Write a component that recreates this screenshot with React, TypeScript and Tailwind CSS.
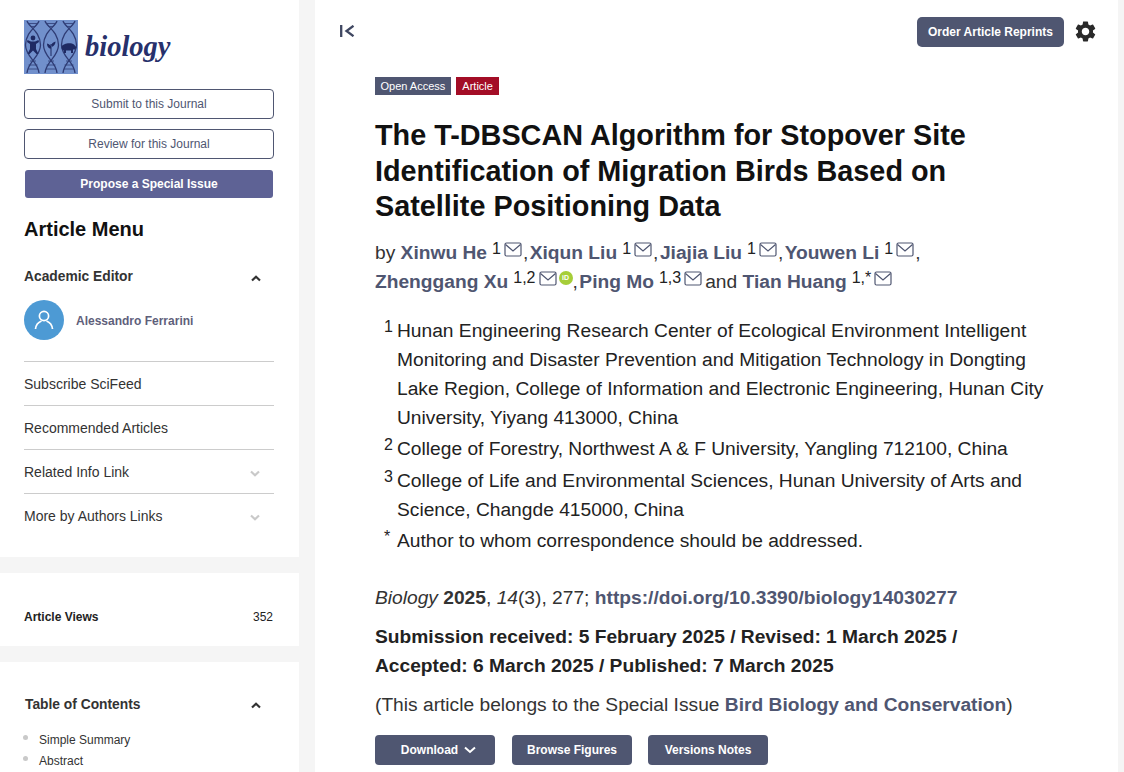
import React from "react";
import { MdSettings } from "react-icons/md";

const Mail = () => (
  <svg width="18" height="15" viewBox="0 0 18 15" fill="none" stroke="#4f5671" strokeWidth="1.2" className="inline-block align-baseline ml-[3px] mr-[1px] relative top-[-2px]">
    <rect x="1" y="1" width="16" height="13" rx="1.5" />
    <path d="M1.5 2.5 L9 9 L16.5 2.5" />
  </svg>
);

const Chevron = ({ up, light }: { up?: boolean; light?: boolean }) => (
  <svg width="10" height="7" viewBox="0 0 10 7" fill="none" stroke={light ? "#c9c9c9" : "#333333"} strokeWidth="2.2">
    {up ? <path d="M1 5.5 L5 1.8 L9 5.5" /> : <path d="M1 1.5 L5 5.2 L9 1.5" />}
  </svg>
);

const Logo = () => (
  <svg width="54" height="54" viewBox="0 0 54 54" className="shrink-0">
    <rect width="54" height="54" fill="#7190cc" />
    <g fill="none" stroke="#2f3c75" strokeWidth="1.3">
      {[0, 18, 36].map((x) => (
        <g key={x} transform={`translate(${x} 0)`}>
          <path d="M3 1 C 5 7, 16 11, 16.5 25 C 16.5 37, 4 41, 3 53" />
          <path d="M15 1 C 13 7, 2 11, 1.5 25 C 1.5 37, 14 41, 15 53" />
          <path d="M5 3.5 H13 M6.5 6.5 H11.5 M6 41 H12 M4.5 45 H13.5 M4 49 H14" strokeWidth="0.8" />
        </g>
      ))}
    </g>
    <g fill="#1f2a63">
      <circle cx="9" cy="18" r="2.4" />
      <path d="M3.5 20 L7 21.5 H11 L14.5 20 L15 22 L12 24 V29 L14.5 34 H12.5 L9 30.5 L5.5 34 H3.5 L6 29 V24 L3 22 Z" />
      <path d="M26.5 36 V24 H27.5 V36 Z M27 29 C 23.5 28 23 25 23 23.5 C 26 24 27 26 27 29 Z M27 27 C 30.5 26.5 31.5 23.5 31.5 21.5 C 29 22 27 24 27 27 Z" />
      <path d="M37.5 27 C 39 23 47 22.5 50 24.5 L52.5 27.5 L51 29.5 L49 29.5 V33 H47 V30.5 H42 V33 H40 V30.5 C 38.5 30.5 37.5 29 37.5 27 Z" />
    </g>
  </svg>
);

const Sup = ({ children }: { children: React.ReactNode }) => (
  <span className="text-[16px] leading-none font-normal text-[#222222] relative top-[-5px] ml-[5px]">{children}</span>
);

const Author = ({ name }: { name: string }) => <span className="font-bold text-[#4f5671]">{name}</span>;

const Comma = () => <span className="mr-[1.5px]">,</span>;

const MenuRow = ({ label, chevron }: { label: string; chevron?: boolean }) => (
  <div className="h-[44px] border-t border-[#cccccc] flex items-center justify-between pr-[14px] text-[14px] text-[#333333]">
    <span className="relative top-[1px]">{label}</span>
    {chevron && (
      <span className="relative top-[2px]">
        <Chevron light />
      </span>
    )}
  </div>
);

const Aff = ({ n, children }: { n: string; children: React.ReactNode }) => (
  <div className="flex">
    <span className="w-[22px] shrink-0 pl-[9px] text-[16px] leading-[22px] text-[#222222]">{n}</span>
    <span className="flex-1">{children}</span>
  </div>
);

const DarkBtn = ({ children, cls }: { children: React.ReactNode; cls?: string }) => (
  <div className={`w-[120px] h-[30px] rounded-[4px] bg-[#4f5671] text-white text-[12px] font-bold flex items-center justify-center ${cls ?? ""}`}>{children}</div>
);

export default function App() {
  return (
    <div className="w-[1124px] h-[772px] overflow-hidden bg-[#f5f5f5] flex font-['Liberation_Sans',Arial,sans-serif] text-[#222222]">
      <aside className="w-[299px] shrink-0 flex flex-col gap-[16px]">
        <section className="bg-white h-[557px] pl-[24px] pr-[25px] pt-[20px]">
          <div className="flex items-center gap-[7px] h-[54px]">
            <Logo />
            <span className="font-['Liberation_Serif',serif] italic font-bold text-[28.5px] text-[#27306b] leading-none">biology</span>
          </div>
          <div className="mt-[15px] h-[30px] rounded-[4px] border border-[#4f5671] flex items-center justify-center text-[12px] text-[#4f5671]">Submit to this Journal</div>
          <div className="mt-[10px] h-[30px] rounded-[4px] border border-[#4f5671] flex items-center justify-center text-[12px] text-[#4f5671]">Review for this Journal</div>
          <div className="mt-[11px] mx-[1px] h-[28px] rounded-[3px] bg-[#5e6295] flex items-center justify-center text-[12px] font-bold text-white">Propose a Special Issue</div>
          <h2 className="mt-[19px] text-[20px] leading-[24px] font-bold text-[#111111]">Article Menu</h2>
          <div className="mt-[28px] flex items-center justify-between pr-[13px] h-[16px]">
            <span className="text-[13.8px] font-bold text-[#333333]">Academic Editor</span>
            <span className="relative top-[1px]"><Chevron up /></span>
          </div>
          <div className="mt-[15px] flex items-center gap-[12px]">
            <div className="w-[40px] h-[40px] rounded-full bg-[#4d9ad4] flex items-center justify-center">
              <svg width="22" height="22" viewBox="0 0 22 22" fill="none" stroke="white" strokeWidth="1.7">
                <circle cx="11" cy="7" r="4.6" />
                <path d="M2.5 20 C 3 15 6 13 8.5 12 M19.5 20 C 19 15 16 13 13.5 12" />
              </svg>
            </div>
            <span className="text-[12px] font-bold text-[#5f5f7b] relative top-[1px]">Alessandro Ferrarini</span>
          </div>
          <div className="mt-[21px]">
            <MenuRow label="Subscribe SciFeed" />
            <MenuRow label="Recommended Articles" />
            <MenuRow label="Related Info Link" chevron />
            <MenuRow label="More by Authors Links" chevron />
          </div>
        </section>
        <section className="bg-white h-[73px] pl-[24px] pr-[26px] flex items-center justify-between pt-[15px] text-[12px]">
          <span className="font-bold text-[#222222]">Article Views</span>
          <span>352</span>
        </section>
        <section className="bg-white flex-1 pl-[25px] pr-[38px] pt-[34px]">
          <div className="flex items-center justify-between h-[16px]">
            <span className="text-[13.8px] font-bold text-[#333333] relative top-[1px]">Table of Contents</span>
            <span className="relative top-[1px]"><Chevron up /></span>
          </div>
          <ul className="mt-[17px] text-[12px] text-[#333333]">
            {["Simple Summary", "Abstract"].map((t) => (
              <li key={t} className="h-[21px] flex items-center relative pl-[14px]">
                <span className="absolute left-[-2px] top-[6px] w-[5px] h-[5px] rounded-full bg-[#c9c9c9]" />
                {t}
              </li>
            ))}
          </ul>
        </section>
      </aside>
      <main className="ml-[16px] w-[803px] bg-white">
        <div className="h-[63px] pl-[25px] pr-[22px] flex items-center justify-between">
          <svg width="15" height="12" viewBox="0 0 15 12" fill="none" stroke="#3f4761" strokeWidth="2.3" className="relative top-[-1px]">
            <path d="M1.2 0 V12 M13.5 0.8 L6.5 6 L13.5 11.2" />
          </svg>
          <div className="flex items-center gap-[9px]">
            <div className="w-[147px] h-[30px] rounded-[5px] bg-[#4f5671] text-white text-[12px] font-bold flex items-center justify-center">Order Article Reprints</div>
            <MdSettings size={25} color="#2a2a2a" className="mr-[-2px]" />
          </div>
        </div>
        <div className="pl-[60px] pr-[72px]">
          <div className="flex gap-[5px] mt-[14px] text-[11px] text-white h-[18px]">
            <span className="bg-[#4f5671] px-[5.5px] flex items-center">Open Access</span>
            <span className="bg-[#a30d26] px-[6.5px] flex items-center">Article</span>
          </div>
          <h1 className="mt-[23px] text-[28.8px] leading-[35.5px] font-bold text-[#111111]">
            The T-DBSCAN Algorithm for Stopover Site Identification of Migration Birds Based on Satellite Positioning Data
          </h1>
          <div className="mt-[13px] text-[19.2px] leading-[29px] text-[#333333]">
            by <Author name="Xinwu He" /><Sup>1</Sup><Mail /><Comma /><Author name="Xiqun Liu" /><Sup>1</Sup><Mail /><Comma /><Author name="Jiajia Liu" /><Sup>1</Sup><Mail /><Comma /><Author name="Youwen Li" /><Sup>1</Sup><Mail />,
            <br />
            <Author name="Zhenggang Xu" /><Sup>1,2</Sup><Mail />
            <span className="inline-block w-[14px] h-[14px] rounded-full bg-[#a6ce39] text-white text-[7px] font-bold text-center leading-[14px] align-baseline relative top-[-8px] ml-[1px]">iD</span><Comma /><Author name="Ping Mo" /><Sup>1,3</Sup><Mail /><span className="ml-[2px]">and</span> <Author name="Tian Huang" /><Sup>1,*</Sup><Mail />
          </div>
          <div className="mt-[20px] text-[19.2px] leading-[29px] text-[#222222] flex flex-col gap-[2.5px]">
            <Aff n="1">Hunan Engineering Research Center of Ecological Environment Intelligent Monitoring and Disaster Prevention and Mitigation Technology in Dongting Lake Region, College of Information and Electronic Engineering, Hunan City University, Yiyang 413000, China</Aff>
            <Aff n="2">College of Forestry, Northwest A &amp; F University, Yangling 712100, China</Aff>
            <Aff n="3">College of Life and Environmental Sciences, Hunan University of Arts and Science, Changde 415000, China</Aff>
            <Aff n="*">Author to whom correspondence should be addressed.</Aff>
          </div>
          <div className="mt-[28px] text-[19.2px] leading-[29px] text-[#333333]">
            <em>Biology</em> <b>2025</b>, <em>14</em>(3), 277; <b className="text-[#4f5671]">https://doi.org/10.3390/biology14030277</b>
          </div>
          <div className="mt-[10px] text-[19.2px] leading-[29px] font-bold text-[#222222]">
            Submission received: 5 February 2025 / Revised: 1 March 2025 / Accepted: 6 March 2025 / Published: 7 March 2025
          </div>
          <div className="mt-[10px] text-[19.2px] leading-[29px] text-[#333333]">
            (This article belongs to the Special Issue <b className="text-[#4f5671]">Bird Biology and Conservation</b>)
          </div>
          <div className="mt-[16px] flex gap-[16px]">
            <DarkBtn cls="pl-[7px]">
              <span>Download</span>
              <svg width="12" height="8" viewBox="0 0 12 8" fill="none" stroke="white" strokeWidth="2" className="ml-[6px]"><path d="M1 1.5 L6 6 L11 1.5" /></svg>
            </DarkBtn>
            <DarkBtn cls="ml-[1px]">Browse Figures</DarkBtn>
            <DarkBtn>Versions Notes</DarkBtn>
          </div>
        </div>
      </main>
    </div>
  );
}
